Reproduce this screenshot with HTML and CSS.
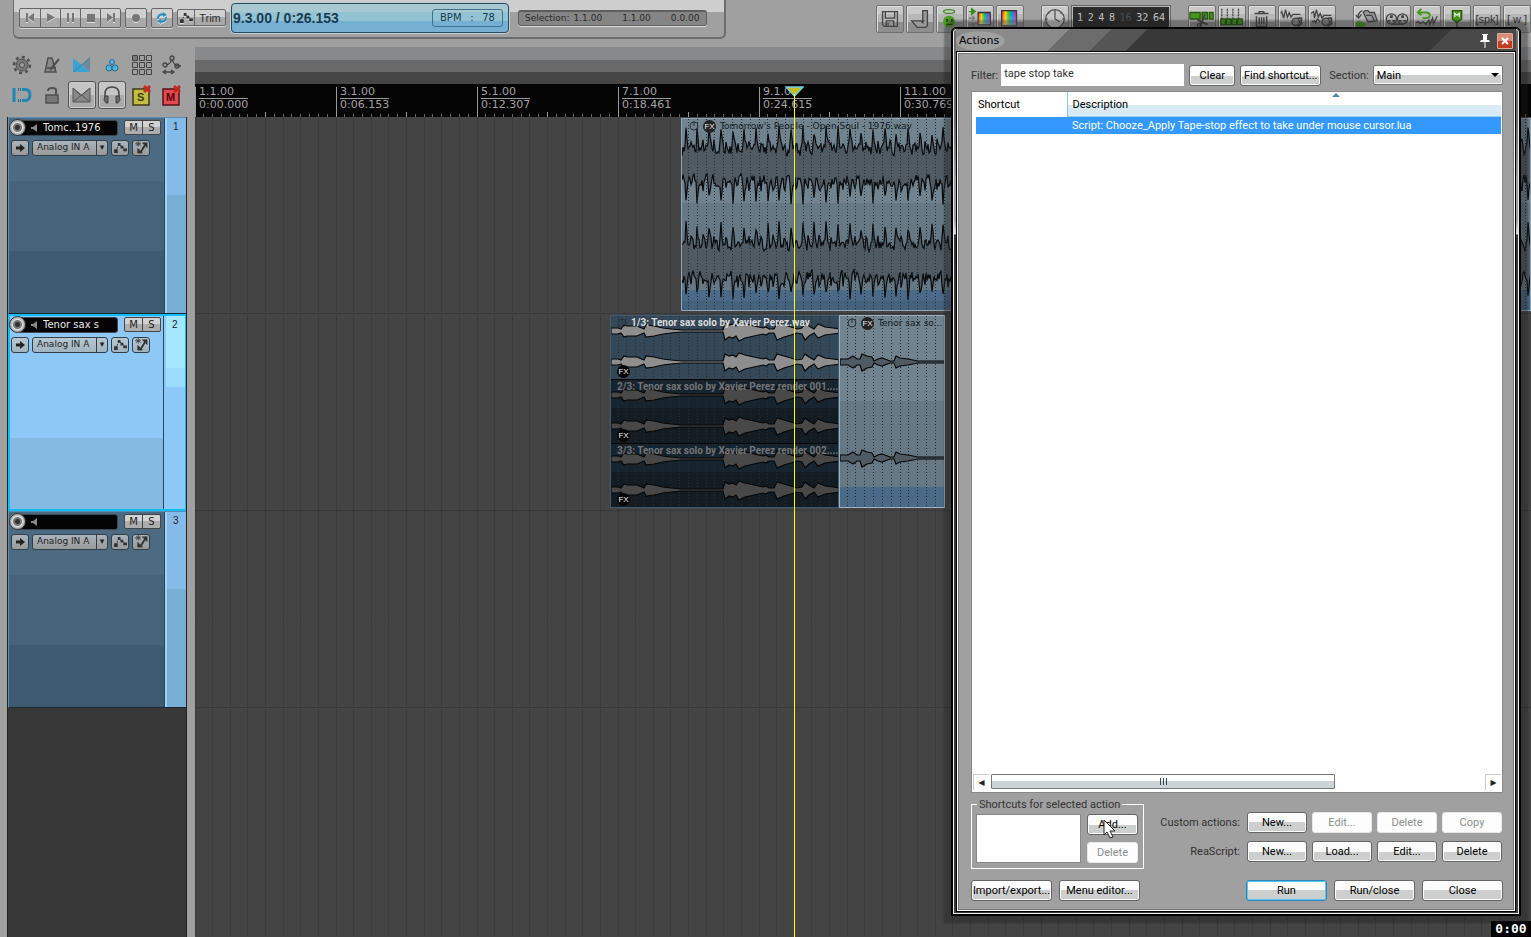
FILE: index.html
```html
<!DOCTYPE html>
<html lang="en">
<head>
<meta charset="utf-8">
<title>Actions</title>
<link rel="stylesheet" href="styles.css">
</head>
<body>
<svg class="defs" width="0" height="0" aria-hidden="true">
  <symbol id="env" viewBox="0 0 14 12"><path d="M2 10 5 3 9 5 12 9" fill="none" stroke="#333" stroke-dasharray="2 1"/><path d="M0 8h4v4H0zM4 1h3v3H4zM7 4h3v3H7zM10 7h4v3h-4z" fill="#333"/></symbol>
  <symbol id="fxroute" viewBox="0 0 14 14"><path d="m6 12 5-8" fill="none" stroke="#333" stroke-width="2"/><path d="M8 2h5v5zM3 8v5h5zM3.500 0v6M0 3h6.500M1 1l5 4M6 1 1 5" fill="#333" stroke="#333" stroke-width=".8"/></symbol>
  <symbol id="arrow" viewBox="0 0 12 10"><path d="M2 3.500h4V1l5 4-5 4V6.500H2z" fill="#222"/></symbol>
  <symbol id="speaker" viewBox="0 0 8 8"><path d="M0 3h2l4-3v8L2 5H0z" fill="#888"/></symbol>
  <symbol id="power" viewBox="0 0 10 10"><circle cx="5" cy="5" r="4" fill="none" stroke="#26333d"/><path d="M5 0v5" stroke="#26333d"/></symbol>
</svg>

<header class="topbar">
  <section class="transport" aria-label="Transport">
    <div class="segment">
      <button aria-label="Start"><svg width="10" height="10"><path d="M1 0h2v9H1zM9 0v9L3 4.500z"/></svg></button>
      <button aria-label="Play"><svg width="10" height="10"><path d="M1 0v9l8-4.500z"/></svg></button>
      <button aria-label="Pause"><svg width="10" height="10"><path d="M1 0h2v9H1zM6 0h2v9H6z"/></svg></button>
      <button aria-label="Stop"><svg width="10" height="10"><path d="M1 1h8v8H1z"/></svg></button>
      <button aria-label="End"><svg width="10" height="10"><path d="M7 0h2v9H7zM1 0v9l6-4.500z"/></svg></button>
    </div>
    <div class="segment"><button aria-label="Record"><svg width="10" height="10"><circle cx="5" cy="5" r="4"/></svg></button></div>
    <div class="segment"><button aria-label="Repeat"><svg width="12" height="12"><path d="M2 7a4 4 0 0 1 6-4M10 5a4 4 0 0 1-6 4" fill="none" stroke="#2a8fc0" stroke-width="2"/><path d="M7 0l4 3-4 2zM5 12 1 9l4-2z" fill="#2a8fc0"/></svg></button></div>
    <div class="segment trim">
      <button aria-label="Envelopes"><svg width="13" height="11"><use href="#env"/></svg></button>
      <button class="wide">Trim</button>
    </div>
    <div class="display"><strong>9.3.00 / 0:26.153</strong><span class="bpm"><span>BPM</span><span>:</span><span>78</span></span></div>
    <div class="selection"><span class="caption">Selection:</span><span>1.1.00</span><span>1.1.00</span><span>0.0.00</span></div>
  </section>
  <nav class="tools" aria-label="Toolbar">
    <div class="toolgroup">
      <button aria-label="Save"><svg viewBox="0 0 28 28"><path d="M6 6h16v16H8l-2-2zM9 6v7h10V6M10 22v-6h8v6M12 18v3" fill="none" stroke="#444"/></svg></button>
      <button aria-label="Dock"><svg viewBox="0 0 28 28"><path d="M17 5h5v16l-2 2H11L5 16h10l2 2zM15 16h4" fill="#999" stroke="#444"/></svg></button>
      <button aria-label="Angel"><svg viewBox="0 0 28 28"><ellipse cx="13" cy="6" rx="6" ry="2" fill="none" stroke="#3b8a1b"/><circle cx="13" cy="17" r="6.500" fill="#4d9c22"/><path d="M10 14h2v3h-2zM15 14h2v3h-2zM10 19h7v1.500h-7z" fill="#223d10"/></svg></button>
      <button aria-label="Color items"><svg viewBox="0 0 28 28"><path d="M2 6h5M5 3l4 3-4 3z" fill="#398b20" stroke="#398b20"/><path d="M2 13h6M6 11l2 2-2 2M2 20h6M6 18l2 2-2 2" fill="none" stroke="#777"/><use href="#swatch" x="12" y="7"/></svg></button>
      <button aria-label="Color tracks"><svg viewBox="0 0 28 28"><defs><linearGradient id="rainbow"><stop offset="0" stop-color="#e11"/><stop offset=".25" stop-color="#fc0"/><stop offset=".5" stop-color="#1b3"/><stop offset=".75" stop-color="#17e"/><stop offset="1" stop-color="#e19"/></linearGradient><linearGradient id="wash" x2="0" y2="1"><stop stop-color="#fff" stop-opacity="0"/><stop offset=".6" stop-color="#fff" stop-opacity=".2"/><stop offset="1" stop-color="#fff" stop-opacity=".5"/></linearGradient><g id="swatch"><path d="M0 0h13v13H0z" fill="url(#rainbow)" stroke="#333"/><path d="M0 0h13v13H0z" fill="url(#wash)"/></g></defs><path d="M5 5h16v16H5z" fill="url(#rainbow)" stroke="#333"/><path d="M5 5h16v16H5z" fill="url(#wash)"/></svg></button>
    </div>
    <div class="toolgroup">
      <button aria-label="Clock"><svg viewBox="0 0 28 28"><circle cx="14" cy="14" r="10" fill="#c5c5c5" stroke="#555"/><path d="M14 6v8l5 3M14 4v2M24 14h-2M4 14h2M21 7l-1 1M7 7l1 1" fill="none" stroke="#555"/></svg></button>
      <div class="grid-size"><span>1</span><span>2</span><span>4</span><span>8</span><span class="off">16</span><span>32</span><span>64</span></div>
    </div>
    <div class="toolgroup">
      <button aria-label="Split"><svg viewBox="0 0 28 28"><path d="M1 7h11v7H1zM14 7h6v7h-6zM22 7h4v7h-4z" fill="#46971d" stroke="#295612"/><path d="m17 9-5 13M9 15l11 5" stroke="#444" stroke-width="2"/><circle cx="11" cy="21" r="2" fill="none" stroke="#444"/></svg></button>
      <button aria-label="Grid split"><svg viewBox="0 0 28 28"><path d="M3 3v11M9 3v11M15 3v11M21 3v11" stroke="#444" stroke-dasharray="2 1"/><path d="M2 14h5v6H2zM8 14h5v6H8zM14 14h5v6h-5zM20 14h5v6h-5z" fill="#46971d" stroke="#295612"/></svg></button>
      <button aria-label="Delete item"><svg viewBox="0 0 28 28"><path d="M6 8h15M8 11v11h11V11M11 8V6h5v2M11 12v8M13.500 12v8M16 12v8" fill="none" stroke="#444" stroke-width="1.500"/></svg></button>
      <button aria-label="Stretch"><svg viewBox="0 0 28 28"><path d="m2 8 1-2 2 7 2-9 2 8 2-5 2 5 2-3h8" fill="none" stroke="#444"/><circle cx="18" cy="17" r="4" fill="#888" stroke="#444"/><path d="M20 13h4v6l-4 3" fill="none" stroke="#444" stroke-width="2"/></svg></button>
      <button aria-label="Reverse"><svg viewBox="0 0 28 28"><path d="m2 8 3-2 1 7 2-9 2 8 2-4 2 5 2-3h8M3 17l3-1 1 2 2-4 3 3" fill="none" stroke="#444"/><circle cx="18" cy="17" r="4" fill="#888" stroke="#444"/><path d="M20 13h4v6l-4 3" fill="none" stroke="#444" stroke-width="2"/></svg></button>
    </div>
    <div class="toolgroup">
      <button aria-label="Folder"><svg viewBox="0 0 28 28"><path d="M9 5q-6 3-4 8M2 10l3 3 3-4" fill="none" stroke="#444"/><path d="M10 7l2-2h3l2 2h5l3 9-10 1zM13 10h6l3 6" fill="#999" stroke="#444"/><path d="M2 18l3-2 3 1 5 2-2 5H3z" fill="#46971d"/></svg></button>
      <button aria-label="Reel"><svg viewBox="0 0 28 28"><g fill="none" stroke="#444"><circle cx="8" cy="14" r="5.500"/><circle cx="20" cy="14" r="5.500"/><path d="M8 19.500h13"/></g><path d="M6.500 10h3v3h-3zM4 15h3v2H4zM9 15h3v2H9zM18.500 10h3v3h-3zM16 15h3v2h-3zM21 15h3v2h-3z" fill="#444"/></svg></button>
      <button aria-label="Undo wave"><svg viewBox="0 0 28 28"><path d="M5 7h8q4 0 4 3t-5 3H9M8 3 4 7l4 3" fill="none" stroke="#46971d" stroke-width="2"/><path d="m2 18 3-1 2 2 3-2 3 3 3-5 1 5 3-7 1 6 4-8" fill="none" stroke="#444"/></svg></button>
      <button aria-label="Marker"><svg viewBox="0 0 28 28"><path d="M9 5h10v9l-5 4-5-4z" fill="#46971d" stroke="#295612"/><path d="M11.500 12V8l2.500 2 2.500-2v4" fill="none" stroke="#dfe8d8"/><path d="M14 18v7" stroke="#444"/></svg></button>
      <button class="text">[spk]</button>
      <button class="text">[ w ]</button>
    </div>
  </nav>
</header>

<main class="workspace">
  <aside class="sidebar">
    <div class="quick">
      <button aria-label="Settings"><svg width="20" height="20"><circle cx="10" cy="10" r="6" fill="#777" stroke="#505050"/><circle cx="10" cy="10" r="8" fill="none" stroke="#505050" stroke-width="2.500" stroke-dasharray="3 3.200"/><circle cx="10" cy="10" r="2.500" fill="#a0a0a0" stroke="#505050"/></svg></button>
      <button aria-label="Metronome"><svg width="20" height="20"><path d="M3 17 6 3h4l4 14zM5 13h9" fill="#8a8a8a" stroke="#505050" stroke-width="1.500"/><path d="m8 15 9-11" stroke="#505050" stroke-width="2"/></svg></button>
      <button aria-label="Crossfade"><svg width="20" height="20"><path d="M1 17V3l10 9z" fill="#35a8dc"/><path d="M1 3v14h17z" fill="#3aa5d4"/><path d="M10 10 18 3v14z" fill="#6b8ba0"/><path d="M1 17 18 3" stroke="#3b7c9c"/></svg></button>
      <button aria-label="Grouping"><svg width="20" height="20"><g fill="#4eb5e0" stroke="#256a8c"><circle cx="10" cy="7" r="2.500"/><circle cx="7" cy="13" r="3"/><circle cx="13" cy="13" r="3"/></g></svg></button>
      <button aria-label="Grid"><svg width="22" height="22"><path d="M1.500 1.500h5v5h-5zM8.500 1.500h5v5h-5zM15.500 1.500h5v5h-5zM1.500 8.500h5v5h-5zM8.500 8.500h5v5h-5zM15.500 8.500h5v5h-5zM1.500 15.500h5v5h-5zM8.500 15.500h5v5h-5zM15.500 15.500h5v5h-5z" fill="none" stroke="#444"/><path d="M2 2h4v4H2z" fill="#777"/></svg></button>
      <button aria-label="Envelope move"><svg width="20" height="20"><g fill="none" stroke="#444" stroke-width="1.300"><path d="M4 10q5-1 6-7 1 6 5 8h4M2 17h9M4 15l-3 2 3 2M9 15l3 2-3 2"/><circle cx="10" cy="3" r="2" fill="#a0a0a0"/><circle cx="3" cy="10" r="2"/><circle cx="15" cy="11" r="2"/></g></svg></button>
      <button aria-label="Snap"><svg width="20" height="20"><path d="M2 3v14" stroke="#1f86b5" stroke-width="3"/><path d="M6 4.500h3M6 15.500h3" stroke="#256a8c" stroke-width="3" stroke-dasharray="1 1"/><path d="M10 4.500h3q5 0 5 5.500t-5 5.500h-3" fill="none" stroke="#1f86b5" stroke-width="3"/></svg></button>
      <button aria-label="Lock"><svg width="20" height="20"><path d="M4 10h12v8H4z" fill="#777" stroke="#505050" stroke-width="1.500"/><path d="M14 10V5q0-2-4-2-4 0-4 3" fill="none" stroke="#505050" stroke-width="2"/></svg></button>
      <button class="raised" aria-label="Auto crossfade"><svg width="20" height="18"><path d="M1 16V2l8 8 9-8v14z" fill="#888" stroke="#555"/><path d="m1 16 17-14M1 2l17 14" stroke="#555"/></svg></button>
      <button class="raised" aria-label="Headphones"><svg width="20" height="18"><path d="M3 13V8q0-7 7-7t7 7v5" fill="none" stroke="#444" stroke-width="1.500"/><path d="M3 10h3v7H4l-2-3zM17 10h-3v7h2l2-3z" fill="#666" stroke="#444"/></svg></button>
      <button aria-label="Unsolo"><svg width="22" height="22"><path d="M2 5h16v16H2z" fill="#c3bd42" stroke="#3d3a10" stroke-width="1.500"/><text x="6" y="17" class="glyph">S</text><path d="m13 2 6 6m0-6-6 6" stroke="#c42a22" stroke-width="3"/></svg></button>
      <button aria-label="Unmute"><svg width="22" height="22"><path d="M2 5h16v16H2z" fill="#e04a50" stroke="#5a1014" stroke-width="1.500"/><text x="5" y="17" class="glyph light">M</text><path d="m13 2 6 6m0-6-6 6" stroke="#c42a22" stroke-width="3"/></svg></button>
    </div>
    <div class="tracks" id="tracks"></div>
  </aside>

  <section class="arrange" aria-label="Arrangement">
    <div class="strip light"></div><div class="strip mid"></div><div class="strip dark"></div>
    <div class="ruler">
      <svg class="ticks" id="ticks" width="100%" height="33"></svg>
      <div class="bars">
        <span>1.1.00<i></i>0:00.000</span><span>3.1.00<i></i>0:06.153</span><span>5.1.00<i></i>0:12.307</span><span>7.1.00<i></i>0:18.461</span><span>9.1.00<i></i>0:24.615</span><span>11.1.00<i></i>0:30.769</span>
      </div>
    </div>
    <div class="canvas">
      <svg class="gridlines" id="gridlines" width="100%" height="100%"></svg>
      <article class="clip drums"><svg class="wave" id="drums" width="100%" height="193"></svg><h2><svg width="10" height="10"><use href="#power"/></svg><b class="fx">FX</b>Tomorrow's People - Open Soul - 1976.wav</h2></article>
      <div class="clip takes">
        <article class="take active"><svg class="wave" width="229" height="64"></svg><h2><svg width="10" height="10"><use href="#power"/></svg>1/3: Tenor sax solo by Xavier Perez.wav</h2><b class="fx low">FX</b></article>
        <article class="take"><svg class="wave" width="229" height="64"></svg><h2>2/3: Tenor sax solo by Xavier Perez render 001....</h2><b class="fx low">FX</b></article>
        <article class="take"><svg class="wave" width="229" height="64"></svg><h2>3/3: Tenor sax solo by Xavier Perez render 002....</h2><b class="fx low">FX</b></article>
      </div>
      <article class="clip tail"><svg class="wave" id="tail" width="106" height="192"></svg><h2><svg width="10" height="10"><use href="#power"/></svg><b class="fx">FX</b>Tenor sax so...</h2></article>
    </div>
    <div class="playhead"><svg width="19" height="11"><path d="M1 1h17l-8.500 9z" fill="#c9bd12" stroke="#6fd0ea" stroke-width="1.500"/></svg></div>
  </section>
</main>

<section class="dialog" role="dialog" aria-labelledby="dialog-title">
  <header class="titlebar">
    <h1 id="dialog-title">Actions</h1>
    <button class="pin" aria-label="Pin"><svg width="12" height="14"><path d="M3 0h6v1H8v5h2l1 2H1l1-2h2V1H3z" fill="#fff"/><path d="M6 7v7" stroke="#fff"/></svg></button>
    <button class="close" aria-label="Close window"><svg width="8" height="8"><path d="m1 1 6 6m0-6-6 6" stroke="#fff" stroke-width="2"/></svg></button>
  </header>
  <div class="client">
    <div class="filter">
      <label for="filter" class="filter-label">Filter:</label><input id="filter" type="text" value="tape stop take">
      <button class="btn clear">Clear</button><button class="btn find">Find shortcut...</button>
      <label for="section" class="section-label">Section:</label>
      <span class="dropdown"><select id="section"><option>Main</option></select></span>
    </div>
    <div class="list">
      <table>
        <thead><tr><th class="key">Shortcut</th><th>Description<svg class="sort" width="8" height="5"><path d="M0 4 4 0l4 4z" fill="#4a87ab"/></svg></th></tr></thead>
        <tbody><tr><td></td><td>Script: Chooze_Apply Tape-stop effect to take under mouse cursor.lua</td></tr></tbody>
      </table>
      <div class="scroll"><button aria-label="Scroll left">◂</button><div class="rail"><div class="thumb"><i></i><i></i><i></i></div></div><button aria-label="Scroll right">▸</button></div>
    </div>
    <div class="panel">
      <fieldset>
        <legend>Shortcuts for selected action</legend>
        <div class="keys"></div>
        <div class="stack"><button class="btn add">Add...<svg class="cursor" width="13" height="20"><path d="M1 1v15l3-3 3 6 3-1-3-6h5z" fill="#fff" stroke="#222"/></svg></button><button class="btn" disabled>Delete</button></div>
      </fieldset>
      <div class="scripts">
        <span>Custom actions:</span><button class="btn">New...</button><button class="btn" disabled>Edit...</button><button class="btn" disabled>Delete</button><button class="btn" disabled>Copy</button>
        <span>ReaScript:</span><button class="btn">New...</button><button class="btn">Load...</button><button class="btn">Edit...</button><button class="btn">Delete</button>
      </div>
    </div>
    <footer class="actions">
      <button class="btn">Import/export...</button><button class="btn">Menu editor...</button>
      <button class="btn run">Run</button><button class="btn big">Run/close</button><button class="btn big">Close</button>
    </footer>
  </div>
</section>
<div class="timer">0:00</div>
<script src="app.js"></script>
</body>
</html>
```
FILE: styles.css
```css
* { box-sizing: border-box; }
body { margin: 0; height: 100vh; display: flex; flex-direction: column; overflow: hidden; position: relative; background: #a0a0a0; color: #222; font: 11px/13px "DejaVu Sans", sans-serif; }
button, input, select { font: inherit; color: inherit; margin: 0; padding: 0; border: 0; background: none; }
button { display: flex; align-items: center; justify-content: center; }
h1, h2 { margin: 0; font-weight: normal; }
.defs { position: absolute; }

.topbar { display: flex; align-items: flex-start; justify-content: space-between; height: 47px; flex: none; }
.transport { display: flex; align-items: center; gap: 4px; height: 39px; margin-left: 13px; padding: 0 17px 2px 5px; border: 1px solid #6c6c6c; border-width: 0 2px 2px 1px; border-radius: 0 0 6px 6px; background: linear-gradient(#cdcecd 12px, #a0a0a0 12px); }
.segment { display: flex; border: 1px solid #666; border-radius: 2px; box-shadow: 0 1px 0 #d5d5d5; background: linear-gradient(#cfd0cf 50%, #a9a9a9 50%); }
.segment button { width: 20px; height: 18px; fill: #777; }
.segment button + button { border-left: 1px solid #666; }
.segment svg { filter: drop-shadow(0 1px 0 #e0e0e0); }
.segment.trim button { height: 15px; width: 16px; }
.segment.trim .wide { width: 31px; font: 11px "Liberation Sans", sans-serif; color: #333; }
.display { display: flex; align-items: center; justify-content: space-between; width: 278px; height: 30px; margin-left: 1px; padding: 0 5px 0 1px; border: 1px solid #234b62; border-radius: 4px; background: linear-gradient(#a8c8d2 0 8px, #93c2d2 8px 17px, #75b0d3 17px); box-shadow: 0 0 0 1px #c5cdd1; color: #173d52; }
.display strong { font: bold 14px "Liberation Sans", sans-serif; }
.bpm { display: flex; justify-content: space-between; width: 71px; height: 18px; padding: 1px 7px; border: 1px solid #3d7390; border-radius: 3px; font: 10px/14px "DejaVu Sans", sans-serif; }
.selection { display: flex; gap: 20px; align-items: center; width: 189px; height: 16px; margin-left: 5px; padding: 0 12px 0 6px; border: 1px solid #5d5d5d; border-top-width: 2px; border-radius: 3px; background: #858585; box-shadow: 0 1px 0 #ddd; font-size: 9px; color: #2a2a2a; white-space: nowrap; }
.selection .caption { margin-right: -16px; }
.tools { display: flex; gap: 17px; padding-top: 5px; }
.toolgroup { display: flex; gap: 2px; }
.toolgroup button { width: 28px; height: 28px; border: 1px solid #707070; border-radius: 2px; box-shadow: inset 1px 1px 0 #ddd; background: linear-gradient(#c9c9c9 8px, #b7b7b7 8px 16px, #8e8e8e 16px); }
.toolgroup button svg { width: 26px; height: 26px; stroke-width: 1.4; }
.toolgroup button.text { font: 11px "Liberation Sans", sans-serif; color: #333; }
.grid-size { display: flex; align-items: center; justify-content: space-between; width: 100px; height: 25px; padding: 0 4px; border: 2px solid #b7b7b7; outline: 1px solid #666; outline-offset: -1px; background: #2b2b2b; color: #c5c5c5; font: 10px "DejaVu Sans Mono", monospace; }
.grid-size .off { color: #474f55; }

.workspace { flex: 1; min-height: 0; display: grid; grid-template-columns: 195px 1fr; }
.sidebar { display: flex; flex-direction: column; padding: 3px 8px 0 7px; }
.quick { display: grid; grid-template-columns: repeat(6, 30px); grid-auto-rows: 30px; margin-bottom: 7px; }
.quick .raised { margin: 1px; border: 1px solid #555; border-radius: 3px; background: linear-gradient(#c5c5c5 50%, #aaa 50%); box-shadow: inset 0 0 0 1px #ccc; }
.glyph { font: bold 11px "Liberation Sans", sans-serif; fill: #3d3a10; }
.glyph.light { fill: #5a0000; }
.tracks { flex: 1; background: #383838; border-left: 1px solid #222; border-right: 1px solid #222; }
.track { display: grid; grid-template-columns: 1fr 21px; height: 197px; border: 1px solid #5f8db0; border-right: 0; border-bottom-color: #1a2630; background: linear-gradient(#4c6a82 63px, #476379 63px 133px, #3f5b71 133px); }
.track .number { padding: 2px 0 0 6px; border-left: 2px solid #9fd0f5; box-shadow: -1px 0 0 #28465e; font: 10px/13px "Liberation Sans", sans-serif; background: linear-gradient(#84bbe8 77px, #76afd3 77px); color: #223; }
.track.selected { border: 1px solid #10bdf8; box-shadow: inset 0 0 0 1px #10bdf8; background: linear-gradient(#8dc8f6 123px, #84b9e2 123px); }
.track.selected .number { margin: 1px 0; border-left-color: #8dc8f6; background: linear-gradient(#a5e7ff 52px, #9cdcff 52px 71px, #8dc8f6 71px); }
.track .controls { padding: 1px 4px 0 0; }
.track.selected .controls { padding-right: 3px; }
.row { display: flex; align-items: center; height: 17px; margin-bottom: 3px; }
.knob { width: 17px; height: 17px; flex: none; border-radius: 50%; border: 1px solid #333; background: radial-gradient(#333 0 2px, #777 3px 4px, #ddd 5px, #aaa 7px); z-index: 1; }
.namebox { display: flex; align-items: center; flex: none; width: 100px; height: 16px; margin-left: -8px; padding-left: 12px; gap: 4px; border: 1px solid #3c4750; border-radius: 3px; background: #040404; }
.namebox input { width: 72px; height: 13px; color: #e8e8e8; font-size: 10px; }
.ms { display: flex; margin-left: auto; border: 1px solid #444; border-radius: 2px; background: linear-gradient(#d2d2d2 50%, #adadad 50%); }
.ms button { width: 17px; height: 13px; font-size: 10px; color: #222; }
.ms button + button { width: 18px; border-left: 1px solid #444; }
.row.io { gap: 3px; padding-left: 2px; }
.small { width: 18px; height: 16px; border: 1px solid #333e46; border-radius: 3px; background: linear-gradient(#a9b4bb, #9a9a9a); }
.selected .small, .selected .input { background: linear-gradient(#b5c8d2, #a2b4bf); }
.input { position: relative; width: 76px; height: 16px; border: 1px solid #333e46; border-radius: 3px; background: linear-gradient(#a9b4bb, #9a9a9a); }
.input select { appearance: none; display: block; width: 100%; height: 14px; padding-left: 4px; font-size: 9px; color: #222; }
.input::after { content: "▾"; position: absolute; right: 0; top: 0; width: 10px; height: 14px; border-left: 1px solid #333e46; font-size: 9px; text-align: center; pointer-events: none; }

.arrange { position: relative; display: flex; flex-direction: column; overflow: hidden; background: #444; }
.strip { flex: none; height: 12px; }
.strip.light { height: 13px; background: #88898a; }
.strip.mid { background: #696969; }
.strip.dark { background: #464646; }
.ruler { position: relative; flex: none; height: 33px; background: #050505; }
.ticks { position: absolute; inset: 0; }
.bars { display: flex; }
.bars span { flex: 0 0 141px; padding: 2px 0 0 4px; color: #a2a2a2; line-height: 12px; }
.bars i { display: block; width: 49px; height: 1px; background: #999; }
.canvas { flex: 1; position: relative; overflow: hidden; }
.gridlines { position: absolute; inset: 0; }
.clip { position: absolute; overflow: hidden; }
.clip h2 { position: relative; display: flex; align-items: center; gap: 4px; height: 14px; padding-left: 7px; font: 9px/14px "DejaVu Sans", sans-serif; white-space: nowrap; color: #111a22; }
.clip h2 svg { flex: none; }
.wave { position: absolute; left: 0; top: 0; }
.fx { display: inline-flex; align-items: center; justify-content: center; flex: none; width: 13px; height: 13px; border-radius: 50%; background: #222; color: #eee; font: 8px "Liberation Sans", sans-serif; }
.fx.low { position: absolute; left: 6px; bottom: 1px; background: #050505; }
.drums { left: 486px; right: 0; top: 1px; height: 193px; border: 1px solid #8fa5b5; background: linear-gradient(#71838f 84px, #667883 84px 171px, #4a6a87 171px 182px, #45627c 182px); }
.takes { left: 415px; top: 198px; width: 229px; height: 193px; border: 1px solid #3e5b72; }
.take { position: relative; height: 64px; overflow: hidden; border-bottom: 1px solid #050505; background: linear-gradient(#16242f 28px, #131c23 28px); }
.take.active { background: #344857; }
.take h2 { color: #747474; padding-left: 6px; font: bold 10px/14px Roboto, sans-serif; }
.take.active h2 { color: #ddd; }
.tail { left: 644px; top: 198px; width: 106px; height: 193px; border: 1px solid #9db0be; background: linear-gradient(#71838f 85px, #667883 85px 171px, #4a6a87 171px); }
.playhead { position: absolute; left: 590px; top: 39px; bottom: 0; width: 19px; }
.playhead::after { content: ""; position: absolute; left: 9px; top: 8px; bottom: 0; width: 1px; background: #ffff00; }
.playhead svg { display: block; }

.dialog { position: absolute; top: 28px; right: 11px; bottom: 22px; width: 568px; display: flex; flex-direction: column; padding: 0 3px 3px; border: 1px solid #000; outline: 1px solid #000; border-radius: 4px 4px 0 0; background: linear-gradient(#6c6c6c 0 90px, #999 150px 190px, #ddd 205px, #383838 206px) 0 0/100% 240px no-repeat #3a3a3a; box-shadow: inset 0 0 0 1px #eee, 0 0 2px 8px rgba(30,30,30,.35); font: 11px/13px Roboto, sans-serif; color: #000; }
.titlebar { display: flex; align-items: center; height: 23px; flex: none; padding: 0 3px; background: radial-gradient(ellipse 26px 10px at 24px 12px, #a0a0a0 90%, transparent), linear-gradient(135deg, #8a8a8a 0 80px, #6c6c6c 80px 110px, #555 110px 135px, #383838 136px 350px, #484848 351px 440px, #666 441px); }
.titlebar h1 { flex: 1; font: 11px "DejaVu Sans", sans-serif; }
.pin { margin-right: 6px; }
.close { width: 16px; height: 16px; border: 1px solid #e3a797; border-radius: 1px; background: linear-gradient(#d98b78 50%, #c03d20 50%); }
.client { flex: 1; min-height: 0; display: flex; flex-direction: column; margin: 0 1px; padding: 11px 11px 9px 13px; background: #a0a0a0; border: 1px solid #fff; outline: 1px solid #000; box-shadow: inset 0 0 0 1px #777; }
.filter { display: flex; align-items: center; height: 22px; margin-bottom: 5px; color: #333; }
.filter-label { flex: 0 0 24px; white-space: nowrap; }
.filter input { width: 183px; height: 22px; margin-left: 3px; padding: 0 3px 3px; background: #fff; }
.btn { height: 21px; padding: 0 2px; border: 1px solid #666; border-radius: 3px; box-shadow: inset 0 0 0 1px #fff; background: linear-gradient(#fcfcfc 50%, #cdcfce 50%); color: #000; white-space: nowrap; }
.btn:disabled { border-color: #e8e8e8; background: #fdfdfd; color: #8a8f8c; }
.clear { width: 46px; margin: 0 5px; }
.find { width: 81px; }
.section-label { flex: 0 0 38px; margin-left: 8px; white-space: nowrap; }
.dropdown { position: relative; flex: 1; margin-left: 4px; }
.dropdown select { appearance: none; display: block; width: 100%; height: 20px; padding-left: 3px; border: 1px solid #777; border-radius: 2px; background: linear-gradient(#fff 50%, #cdcfce 50%); color: #000; box-shadow: inset 0 0 0 1px #fff; }
.dropdown::after { content: ""; position: absolute; right: 4px; top: 8px; border: 4px solid transparent; border-top-color: #000; border-bottom: 0; pointer-events: none; }
.list { flex: 1; min-height: 0; display: flex; flex-direction: column; justify-content: space-between; padding: 0 1px 2px 4px; border: 1px solid #888; background: #fff; }
table { width: 100%; border-collapse: collapse; table-layout: fixed; }
th { position: relative; height: 24px; padding: 2px 5px 0; text-align: left; font-weight: normal; background: linear-gradient(#fff 13px, #d8ebf4 13px); border-bottom: 1px solid #9cd0ee; }
th.key { width: 91px; padding-left: 2px; background: #fff; border-right: 1px solid #8ac6ee; border-bottom: 0; }
.sort { position: absolute; left: 61%; top: 1px; }
td { height: 18px; padding: 0 5px; background: #3399ff; background-clip: padding-box; color: #fff; border-top: 1px solid #fff; }
.scroll { display: flex; height: 16px; margin-left: -3px; gap: 2px; }
.scroll button { width: 16px; border: 1px solid #ccc; border-width: 1px 0 0 1px; font-size: 12px; font-family: "DejaVu Sans", sans-serif; color: #222; }
.rail { flex: 1; }
.thumb { display: flex; align-items: center; justify-content: center; gap: 2px; width: 70%; height: 15px; border: 1px solid #777; border-radius: 1px; background: linear-gradient(#fff 50%, #cbd3d6 50%); }
.thumb i { width: 1px; height: 7px; background: #345; }
.panel { display: flex; justify-content: space-between; margin-top: 5px; color: #333; }
fieldset { display: flex; gap: 6px; width: 173px; margin: 0; padding: 3px 5px 5px 4px; border: 1px solid #fff; }
legend { padding: 0 2px; margin-left: 1px; white-space: nowrap; }
.keys { flex: 1; height: 49px; border: 1px solid #888; background: #fff; }
.stack { display: flex; flex-direction: column; justify-content: space-between; width: 51px; }
.add { position: relative; }
.cursor { position: absolute; left: 15px; top: 4px; }
.scripts { display: grid; grid-template-columns: auto repeat(4, 60px); gap: 8px 5px; align-content: start; align-items: center; padding: 14px 1px 0 0; text-align: right; }
.scripts span { padding-right: 2px; }
.actions { display: flex; gap: 7px; margin-top: 11px; }
.actions .btn { width: 81px; }
.actions .run { margin-left: auto; border-color: #2f86bd; box-shadow: inset 0 0 0 1px #58c6f5; }
.timer { position: absolute; right: 0; bottom: 0; width: 40px; height: 16px; background: #000; color: #fff; font: bold 13px/16px "DejaVu Sans Mono", monospace; text-align: center; }
```
FILE: app.js
```js
const NS = 'http://www.w3.org/2000/svg';
const path = (svg, d, attrs) => {
  const p = document.createElementNS(NS, 'path');
  p.setAttribute('d', d);
  for (const k in attrs) p.setAttribute(k, attrs[k]);
  svg.appendChild(p);
};

// Track control panels
const names = ['Tomc..1976', 'Tenor sax s', ''];
document.getElementById('tracks').innerHTML = names.map((name, i) => `
  <div class="track${i === 1 ? ' selected' : ''}">
    <div class="controls">
      <div class="row"><button class="knob" aria-label="Arm track ${i + 1}"></button>
        <label class="namebox"><svg width="8" height="8"><use href="#speaker"/></svg><input type="text" value="${name}" aria-label="Track ${i + 1} name"></label>
        <div class="ms"><button>M</button><button>S</button></div></div>
      <div class="row io"><button class="small" aria-label="Route"><svg width="12" height="10"><use href="#arrow"/></svg></button>
        <span class="input"><select aria-label="Input"><option>Analog IN A</option></select></span>
        <button class="small" aria-label="Envelopes"><svg width="13" height="11"><use href="#env"/></svg></button>
        <button class="small" aria-label="Effects"><svg width="13" height="13"><use href="#fxroute"/></svg></button></div>
    </div>
    <div class="number">${i + 1}</div>
  </div>`).join('');

// Ruler ticks: 16 per two bars, 141px
const TWO_BARS = 141;
const ticks = document.getElementById('ticks');
let minor = '', major = '', grid = '';
for (let i = 0; i < 176; i++) {
  const x = Math.floor(i * TWO_BARS / 16) + 0.5;
  if (i % 16 === 0) major += `M${x} 3V33`;
  else if (i % 8 === 0) major += `M${x} 28V33`;
  else minor += `M${x} 30V33`;
  if (i % 2 === 0) grid += `M${x} 0V2000`;
}
path(ticks, minor, { stroke: '#666' });
path(ticks, major, { stroke: '#999' });
const lines = document.getElementById('gridlines');
path(lines, grid, { stroke: '#343434', 'stroke-dasharray': '1 1' });
path(lines, 'M0 196.5H3000M0 393.5H3000M0 590.5H3000', { stroke: '#383838' });

const beats = (svg, offset, width, height) => {
  let d = '';
  for (let i = 0; i * TWO_BARS / 16 < offset + width; i++) {
    const x = Math.floor(i * TWO_BARS / 16) - offset + 0.5;
    if (x > 0) d += `M${x} 0V${height}`;
  }
  path(svg, d, { stroke: '#262e34', 'stroke-dasharray': '1 2', fill: 'none' });
};

// Drum loop: steady transients over a dense body
let seed = 7;
const rnd = () => (seed = (seed * 16807) % 2147483647) / 2147483647;
const edge = (base, dir, width) => {
  const pts = [];
  let a = 0;
  for (let x = 0; x <= width; x += 1) {
    const phase = (x + 8.4) % 11.7;
    if (phase < 1) a = 17 + rnd() * 10;
    else if (phase < 2) a = 10 + rnd() * 6;
    else if (phase > 10.7) a = 5 + rnd() * 6;
    else if (phase > 5 && phase < 6.2) a = 5 + rnd() * 9;
    else a = a * 0.3 + rnd() * 11 - 4;
    pts.push([x, (base + dir * a).toFixed(1)]);
  }
  return pts;
};
const join = pts => pts.map(p => p.join(' ')).join('L');
const drums = document.getElementById('drums');
for (const [top, bottom] of [[33, 59], [129, 155]]) {
  const a = edge(top, -1, 850), b = edge(bottom, 1, 850);
  path(drums, 'M' + join(a) + 'L' + join(b.slice().reverse()) + 'Z', { fill: '#4f5a63' });
  path(drums, 'M' + join(a) + 'M' + join(b), { fill: 'none', stroke: '#080b0e', 'stroke-width': 1.2 });
}
beats(drums, 487, 850, 193);

// Sax phrase: amplitude envelope points [x, half height]
const phrase = [[0, 3], [7, 3], [10, 2], [13, 6], [16, 5], [26, 5], [33, 2], [35, 6], [43, 5], [52, 3], [60, 2], [71, 1], [112, 1], [114, 8], [118, 6], [122, 7], [125, 5], [128, 9], [134, 7], [143, 5], [152, 3], [155, 4], [158, 2], [163, 2], [166, 8], [173, 6], [180, 4], [186, 2], [191, 3], [194, 8], [198, 5], [203, 2], [207, 7], [214, 4], [222, 3], [229, 2]];
const ending = [[0, 3], [8, 3], [13, 6], [17, 3], [20, 3], [22, 8], [27, 6], [32, 5], [34, 1], [38, 3], [42, 4], [50, 1], [54, 1], [56, 6], [60, 4], [68, 3], [78, 1], [106, 1]];
const body = (svg, points, y, fill) => {
  const a = points.map(([x, h]) => [x, y - h]);
  const b = points.map(([x, h]) => [x, y + h + (h > 7 ? 1 : 0)]).reverse();
  path(svg, 'M' + join(a) + 'L' + join(b) + 'Z', { fill, stroke: '#050505', 'stroke-width': 1.2 });
};
document.querySelectorAll('.take .wave').forEach((svg, i) => {
  beats(svg, 416, 229, 64);
  body(svg, phrase, 15, i ? '#484848' : '#8e8e8e');
  body(svg, phrase, 46, i ? '#484848' : '#8e8e8e');
});
const tail = document.getElementById('tail');
beats(tail, 645, 106, 192);
body(tail, ending, 46, '#4f5a63');
body(tail, ending, 142, '#4f5a63');
```
